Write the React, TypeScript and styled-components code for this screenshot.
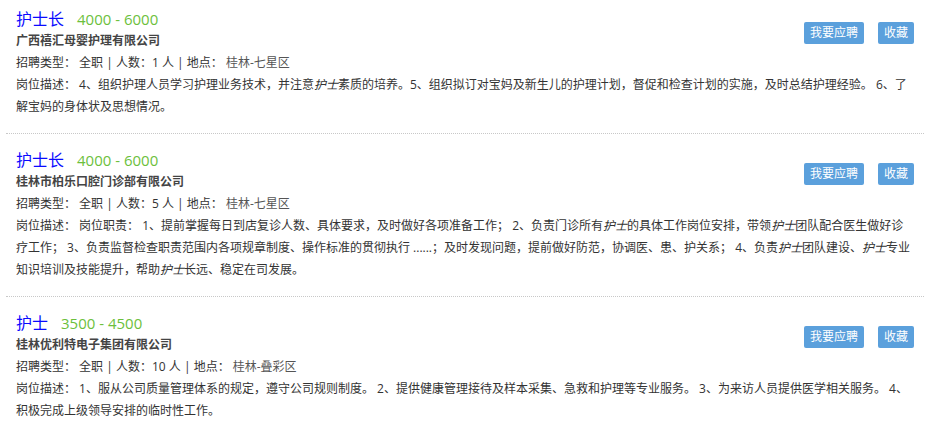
import React from 'react';
import styled, { createGlobalStyle } from 'styled-components';

const GlobalStyle = createGlobalStyle`
  body {
    margin: 0;
    background: #fff;
    font-family: "Open Sans", "Noto Sans CJK SC", sans-serif;
    color: #333;
  }
`;

const JobList = styled.div`
  width: 934px;
`;

const JobItem = styled.div`
  margin: 0 10px 0 6px;
  padding: 15px 10px 15px 10px;
  border-bottom: 1px dotted #c8c8c8;

  &:first-child {
    padding-top: 8px;
  }
  &:last-child {
    border-bottom: none;
  }
`;

const TopRow = styled.div`
  display: flex;
  justify-content: space-between;
  align-items: flex-start;
`;

const TitleLine = styled.div`
  display: flex;
  align-items: baseline;
  gap: 13px;
  height: 22px;
  line-height: 22px;
`;

const JobTitle = styled.a`
  font-size: 16px;
  color: #0a0aff;
  text-decoration: none;
`;

const Salary = styled.span`
  font-size: 15px;
  color: #6cbf3c;
`;

const Company = styled.div`
  font-size: 12px;
  font-weight: bold;
  line-height: 22px;
  color: #444;
`;

const Line = styled.div`
  font-size: 12px;
  line-height: 22px;
  color: #333;

  em {
    font-style: italic;
  }
`;

const Place = styled.span`
  color: #555;
`;

const Actions = styled.div`
  display: flex;
  gap: 14px;
  margin-top: 14px;
`;

const ActionButton = styled.button`
  height: 22px;
  padding: 0 6px;
  border: none;
  border-radius: 2px;
  background: #5ba0dc;
  color: #fff;
  font-family: inherit;
  font-size: 12px;
  line-height: 22px;
  cursor: pointer;
`;

type Job = {
  title: string;
  salary: string;
  company: string;
  count: number;
  place: string;
  desc: React.ReactNode;
};

const H = () => <em>护士</em>;

const jobs: Job[] = [
  {
    title: '护士长',
    salary: '4000 - 6000',
    company: '广西禧汇母婴护理有限公司',
    count: 1,
    place: '桂林-七星区',
    desc: (
      <>
        岗位描述： 4、组织护理人员学习护理业务技术，并注意<H />素质的培养。5、组织拟订对宝妈及新生儿的护理计划，督促和检查计划的实施，及时总结护理经验。 6、了解宝妈的身体状及思想情况。
      </>
    ),
  },
  {
    title: '护士长',
    salary: '4000 - 6000',
    company: '桂林市柏乐口腔门诊部有限公司',
    count: 5,
    place: '桂林-七星区',
    desc: (
      <>
        岗位描述： 岗位职责： 1、提前掌握每日到店复诊人数、具体要求，及时做好各项准备工作； 2、负责门诊所有<H />的具体工作岗位安排，带领<H />团队配合医生做好诊疗工作； 3、负责监督检查职责范围内各项规章制度、操作标准的贯彻执行 ......；及时发现问题，提前做好防范，协调医、患、护关系； 4、负责<H />团队建设、<H />专业知识培训及技能提升，帮助<H />长远、稳定在司发展。
      </>
    ),
  },
  {
    title: '护士',
    salary: '3500 - 4500',
    company: '桂林优利特电子集团有限公司',
    count: 10,
    place: '桂林-叠彩区',
    desc: (
      <>
        岗位描述： 1、服从公司质量管理体系的规定，遵守公司规则制度。 2、提供健康管理接待及样本采集、急救和护理等专业服务。 3、为来访人员提供医学相关服务。 4、积极完成上级领导安排的临时性工作。
      </>
    ),
  },
];

const App: React.FC = () => {
  return (
    <>
      <GlobalStyle />
      <JobList>
        {jobs.map((job, i) => (
          <JobItem key={i}>
            <TopRow>
              <div>
                <TitleLine>
                  <JobTitle href="#">{job.title}</JobTitle>
                  <Salary>{job.salary}</Salary>
                </TitleLine>
                <Company>{job.company}</Company>
                <Line>
                  招聘类型： 全职 | 人数：{job.count} 人 | 地点： <Place>{job.place}</Place>
                </Line>
              </div>
              <Actions>
                <ActionButton>我要应聘</ActionButton>
                <ActionButton>收藏</ActionButton>
              </Actions>
            </TopRow>
            <Line>{job.desc}</Line>
          </JobItem>
        ))}
      </JobList>
    </>
  );
};

export default App;
